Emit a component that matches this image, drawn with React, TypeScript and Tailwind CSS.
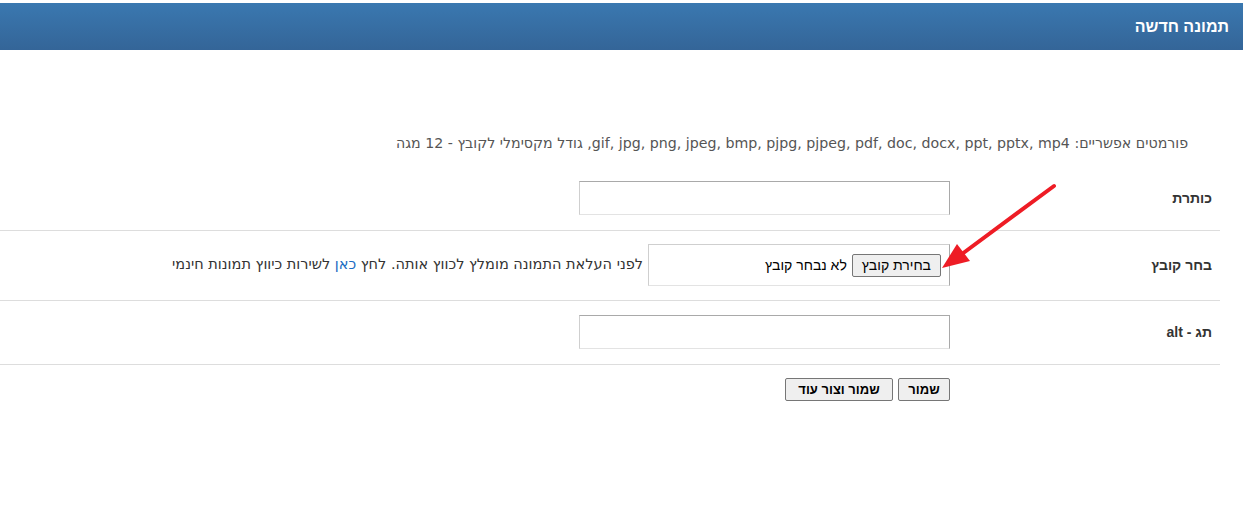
import React from "react";

const font = { fontFamily: '"Liberation Sans", Arial, sans-serif' };
const vfont = { fontFamily: '"DejaVu Sans", Verdana, sans-serif' };

function Row({ label, children, pt, pb }: { label: string; children: React.ReactNode; pt: string; pb: string }) {
  return (
    <div className={`flex items-center border-b border-[#dddddd] ${pt} ${pb}`}>
      <div className="w-[270px] shrink-0 pr-[8px] text-[14px] font-bold text-[#333333]">{label}</div>
      <div className="flex items-center">{children}</div>
    </div>
  );
}

function TextInput() {
  return (
    <input
      type="text"
      className="w-[371px] h-[34px] border border-t-[#a9a9a9] border-r-[#a9a9a9] border-l-[#cfcfcf] border-b-[#e3e3e3] bg-white outline-none"
    />
  );
}

export default function App() {
  return (
    <div dir="rtl" className="relative min-h-[519px] bg-white" style={font}>
      <div className="h-[3px]" />
      <div className="h-[47px] bg-gradient-to-b from-[#3a78b0] to-[#346598] flex items-center pr-[14px] text-[16px] font-bold text-white">
        תמונה חדשה
      </div>
      <div className="w-[1220px] mr-auto">
        <div className="mt-[83px] pr-[32px] text-[14.2px] leading-[20px] text-[#555555]" style={vfont}>
          פורמטים אפשריים: gif, jpg, png, jpeg, bmp, pjpg, pjpeg, pdf, doc, docx, ppt, pptx, mp4, גודל מקסימלי לקובץ - 12 מגה
        </div>
        <Row label="כותרת" pt="pt-[28px]" pb="pb-[15px]">
          <TextInput />
        </Row>
        <Row label="בחר קובץ" pt="pt-[13px]" pb="pb-[14px]">
          <div className="w-[302px] h-[42px] flex items-center pr-[8px] border border-t-[#cfcfcf] border-r-[#a9a9a9] border-l-[#cfcfcf] border-b-[#e3e3e3]">
            <button className="h-[23px] px-[9px] border border-[#767676] rounded-[2px] bg-[#efefef] text-[14px] text-black">
              בחירת קובץ
            </button>
            <span className="mr-[5px] text-[14px] text-black">לא נבחר קובץ</span>
          </div>
          <span className="mr-[5px] text-[14.5px] text-[#333333] whitespace-nowrap" style={vfont}>
            לפני העלאת התמונה מומלץ לכווץ אותה. לחץ <a className="text-[#1a6bc2]">כאן</a> לשירות כיווץ תמונות חינמי
          </span>
        </Row>
        <Row label="תג - alt" pt="pt-[14px]" pb="pb-[15px]">
          <TextInput />
        </Row>
        <div className="flex gap-[5px] pr-[270px] mt-[13px]">
          <button className="h-[23px] w-[52px] border border-[#767676] rounded-[2px] bg-[#efefef] text-[13px] font-bold text-black">
            שמור
          </button>
          <button className="h-[23px] w-[108px] border border-[#767676] rounded-[2px] bg-[#efefef] text-[13px] font-bold text-black">
            שמור וצור עוד
          </button>
        </div>
      </div>
      <svg className="absolute left-0 top-0 pointer-events-none" width="1243" height="519">
        <line x1="1054" y1="186" x2="962" y2="254" stroke="#ee1c25" strokeWidth="4" strokeLinecap="round" />
        <polygon points="942,268 957,244 970,261" fill="#ee1c25" />
      </svg>
    </div>
  );
}
